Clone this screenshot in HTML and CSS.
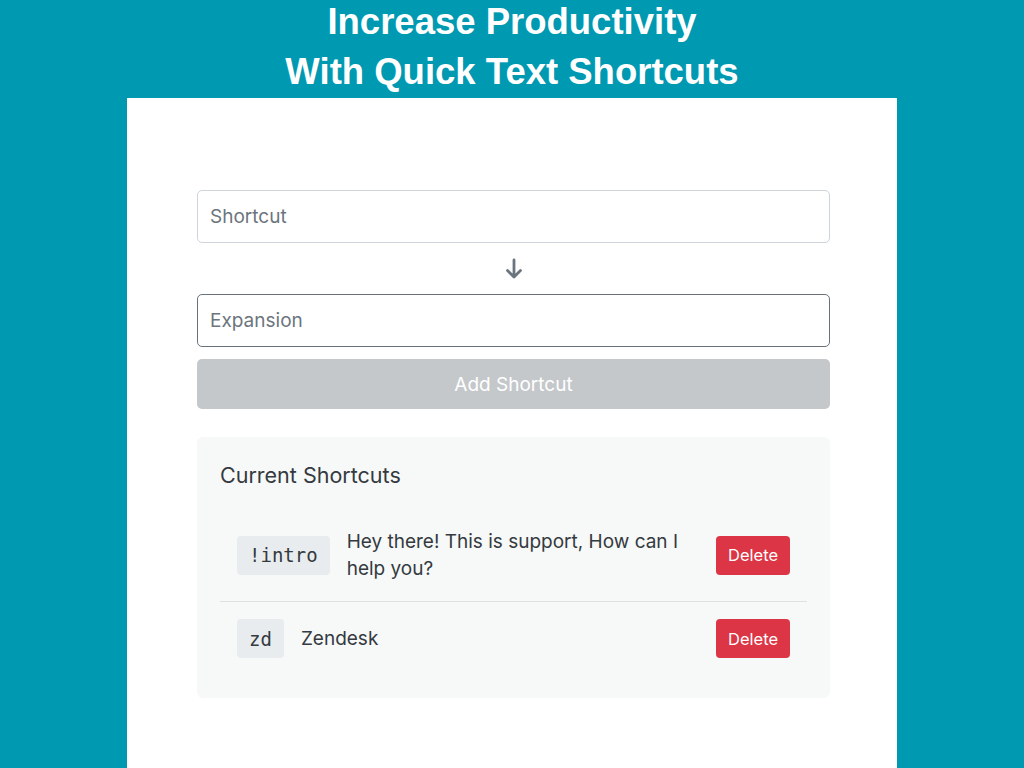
FILE: index.html
```html
<!DOCTYPE html>
<html lang="en">
<head>
<meta charset="utf-8">
<title>Quick Text Shortcuts</title>
<link rel="stylesheet" href="styles.css">
</head>
<body>
<header class="hero">
  <h1 class="hero-title">Increase Productivity<br>With Quick Text Shortcuts</h1>
</header>
<main class="panel">
  <form class="form">
    <input class="field" type="text" placeholder="Shortcut">
    <div class="arrow">
      <svg width="20" height="22" viewBox="0 0 20 22" aria-hidden="true">
        <path d="M10 2 V19 M3.5 12.5 L10 19 L16.5 12.5" fill="none" stroke="#6c757d" stroke-width="2.8" stroke-linecap="round" stroke-linejoin="round"/>
      </svg>
    </div>
    <input class="field field-active" type="text" placeholder="Expansion">
    <button class="add-btn" type="button" disabled>Add Shortcut</button>
  </form>
  <section class="card">
    <h2 class="card-title">Current Shortcuts</h2>
    <ul class="list">
      <li class="row">
        <code class="badge">!intro</code>
        <span class="expansion">Hey there! This is support, How can I help you?</span>
        <button class="del-btn" type="button">Delete</button>
      </li>
      <li class="row">
        <code class="badge">zd</code>
        <span class="expansion">Zendesk</span>
        <button class="del-btn" type="button">Delete</button>
      </li>
    </ul>
  </section>
</main>
</body>
</html>
```

FILE: styles.css
```css
* { box-sizing: border-box; }
html, body { margin: 0; padding: 0; }
body {
  background: #0099b2;
  font-family: "Inter", "Liberation Sans", Arial, sans-serif;
  color: #343a40;
  min-height: 768px;
}
.hero { height: 98px; overflow: hidden; }
.hero-title {
  margin: -3px 0 0 0;
  font-family: "Liberation Sans", Arial, sans-serif;
  font-weight: bold;
  font-size: 36.5px;
  line-height: 50px;
  color: #ffffff;
  text-align: center;
}
.panel {
  width: 770px;
  margin: 0 auto;
  background: #ffffff;
  min-height: 670px;
  padding: 92px 67px 40px 70px;
}
.form { display: flex; flex-direction: column; }
.field {
  height: 53px;
  width: 100%;
  border: 1px solid #ced4da;
  border-radius: 5px;
  padding: 0 12px;
  font-family: inherit;
  font-size: 19px;
  color: #343a40;
  background: #fff;
  outline: none;
}
.field::placeholder { color: #6c757d; }
.field-active { border: 1.5px solid #69717a; }
.arrow {
  height: 51px;
  display: flex;
  align-items: center;
  justify-content: center;
}
.add-btn {
  margin-top: 12px;
  height: 50px;
  width: 100%;
  border: none;
  border-radius: 5px;
  background: #c4c8cb;
  color: #ffffff;
  font-family: inherit;
  font-size: 19px;
}
.card {
  margin-top: 28px;
  background: #f7f8f8;
  border-radius: 6px;
  padding: 24px 23px 23px 23px;
}
.card-title {
  margin: 0 0 39px 0;
  font-size: 21.5px;
  font-weight: normal;
  line-height: 28px;
  color: #343a40;
}
.list { list-style: none; margin: 0; padding: 0; }
.row {
  display: flex;
  align-items: center;
  gap: 17px;
  padding: 17px 17px;
}
.row + .row { border-top: 1px solid #dee0e2; }
.row:first-child { padding-top: 0; padding-bottom: 19px; }
.badge {
  flex: none;
  height: 39px;
  display: flex;
  align-items: center;
  padding: 0 12px;
  background: #e9ecef;
  border-radius: 4px;
  font-family: "DejaVu Sans Mono", "Liberation Mono", monospace;
  font-size: 19px;
  color: #343a40;
}
.expansion {
  flex: 1;
  font-size: 19px;
  line-height: 27px;
  padding-right: 8px;
}
.del-btn {
  flex: none;
  width: 74px;
  height: 39px;
  border: none;
  border-radius: 4px;
  background: #dc3545;
  color: #ffffff;
  font-family: inherit;
  font-size: 16.5px;
}
```
